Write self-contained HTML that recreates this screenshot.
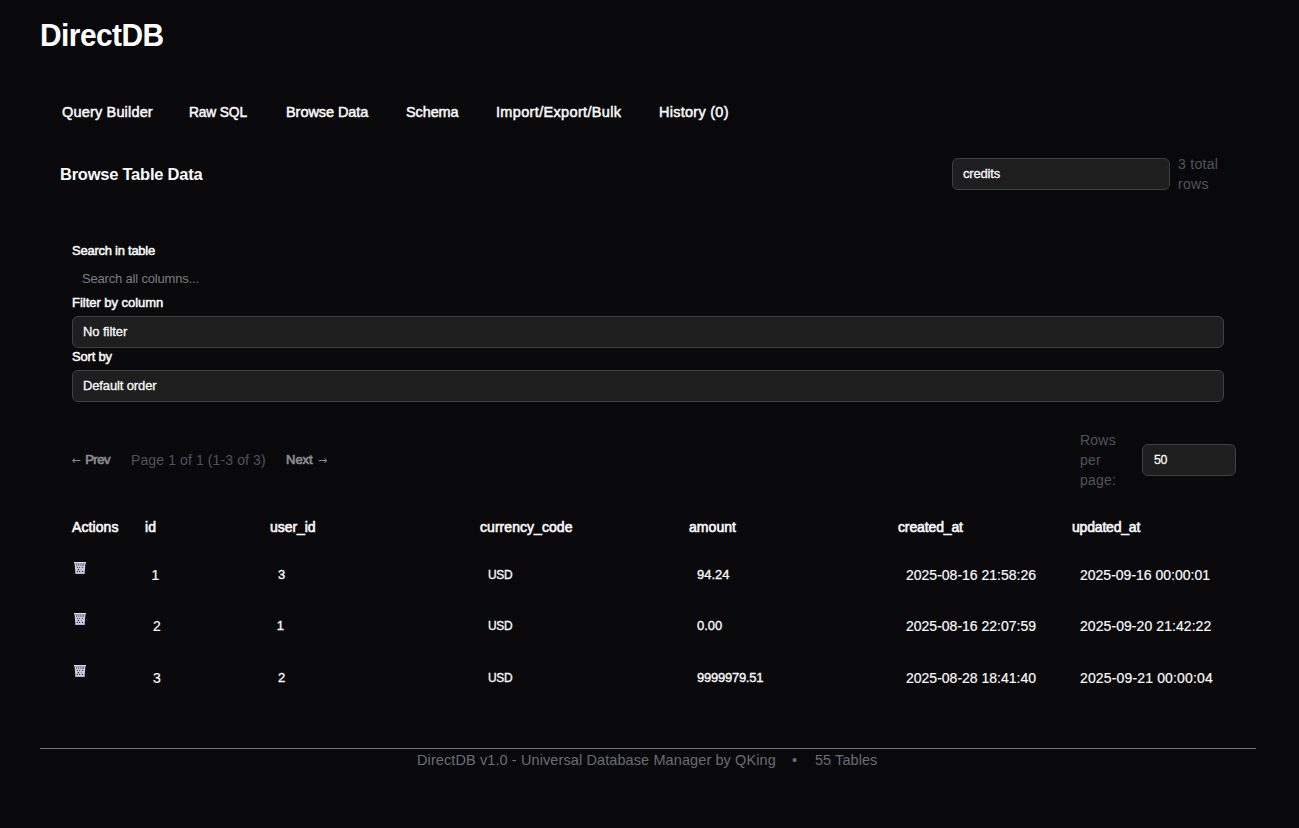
<!DOCTYPE html>
<html lang="en">
<head>
<meta charset="utf-8">
<title>DirectDB</title>
<style>
*{box-sizing:border-box;margin:0;padding:0}
html,body{width:1299px;height:828px;overflow:hidden;background:#09090b}
body{position:relative;font-family:"Liberation Sans",Arial,sans-serif;color:#fafafa;font-size:13px}
.abs{position:absolute;white-space:nowrap}
h1{left:40px;top:16px;font-size:32px;line-height:38px;font-weight:700;letter-spacing:-0.6px;color:#fff;transform:scaleX(0.935);transform-origin:0 0}
nav a{position:absolute;top:96px;line-height:32px;font-size:14.5px;font-weight:400;color:#fafafa;text-decoration:none;white-space:nowrap;-webkit-text-stroke:0.5px #fafafa}
h2{left:60px;top:163px;font-size:16.5px;line-height:22px;font-weight:700;color:#fafafa;letter-spacing:-0.24px}
.sel{background:#1e1e1e;border:1px solid #404040;border-radius:6px;height:32px}
.sel span{position:absolute;left:10px;top:-0.5px;line-height:30px;font-size:13px;color:#fafafa;-webkit-text-stroke:0.3px #fafafa}
.muted{color:#52525b;font-size:14px;line-height:20px}
label{font-size:13px;font-weight:400;-webkit-text-stroke:0.5px #fafafa;line-height:16px;color:#fafafa}
.ph{color:#7c7c82;font-size:13px;line-height:16px}
.pg{font-size:13px;font-weight:400;color:#8b8b8f;line-height:16px;-webkit-text-stroke:0.7px #8b8b8f}
.pg i{position:absolute;top:1px;font-style:normal;font-family:"DejaVu Sans",sans-serif;font-size:11px;line-height:16px;letter-spacing:0;-webkit-text-stroke:0}
th{position:absolute;top:519px;font-size:14px;letter-spacing:0.1px;font-weight:400;-webkit-text-stroke:0.6px #fafafa;line-height:16px;text-align:left;color:#fafafa;white-space:nowrap}
td{position:absolute;white-space:nowrap;color:#fafafa}
.s13{font-size:13px;line-height:16px;-webkit-text-stroke:0.35px #fafafa}
.s14{font-size:14px;line-height:18px;-webkit-text-stroke:0.2px #fafafa}
footer{left:40px;top:748px;width:1216px;border-top:1px solid #71717a;height:30px}
footer span{position:absolute;top:1px;line-height:20px;font-size:14.5px;color:#6c6c74;white-space:nowrap}
svg.tr{display:block;width:12px;height:12px}
</style>
</head>
<body>
<h1 class="abs" id="h1">DirectDB</h1>

<nav>
  <a id="t1" style="left:62px;letter-spacing:0.17px">Query Builder</a>
  <a id="t2" style="left:189px;letter-spacing:-0.15px;transform:scaleX(0.95);transform-origin:0 0">Raw SQL</a>
  <a id="t3" style="left:286px;letter-spacing:-0.06px">Browse Data</a>
  <a id="t4" style="left:406px;letter-spacing:-0.12px">Schema</a>
  <a id="t5" style="left:496px;letter-spacing:0.34px">Import/Export/Bulk</a>
  <a id="t6" style="left:659px;letter-spacing:0.26px">History (0)</a>
</nav>

<h2 class="abs" id="h2">Browse Table Data</h2>
<div class="abs sel" style="left:952px;top:158px;width:218px"><span id="selc" style="letter-spacing:-0.17px">credits</span></div>
<div class="abs muted" id="tot" style="left:1178px;top:154px;letter-spacing:0.30px">3 total<br>rows</div>

<label class="abs" id="l1" style="left:72px;top:243px;letter-spacing:-0.25px">Search in table</label>
<div class="abs ph" id="ph" style="left:82px;top:271px;letter-spacing:-0.18px">Search all columns...</div>
<label class="abs" id="l2" style="left:72px;top:295px;letter-spacing:-0.03px">Filter by column</label>
<div class="abs sel" style="left:72px;top:316px;width:1152px"><span id="nf" style="letter-spacing:-0.07px">No filter</span></div>
<label class="abs" id="l3" style="left:72px;top:349px;letter-spacing:-0.20px">Sort by</label>
<div class="abs sel" style="left:72px;top:370px;width:1152px"><span id="do" style="letter-spacing:-0.13px">Default order</span></div>

<div class="abs pg" id="prev" style="left:72px;top:452px;padding-left:13.2px;letter-spacing:-0.5px"><i style="left:-0.5px">←</i> Prev</div>
<div class="abs muted" id="page" style="left:131px;top:450px;letter-spacing:0.11px">Page 1 of 1 (1-3 of 3)</div>
<div class="abs pg" id="next" style="left:286px;top:452px;padding-right:14px">Next <i style="right:-0.5px">→</i></div>
<div class="abs muted" id="rpp" style="left:1080px;top:430px;letter-spacing:0.22px">Rows<br>per<br>page:</div>
<div class="abs sel" style="left:1142px;top:444px;width:94px"><span id="n50" style="letter-spacing:-0.4px;transform:scaleX(0.95);transform-origin:0 0;left:10.5px">50</span></div>

<table>
<thead><tr>
<th id="th1" style="left:72px;letter-spacing:0.10px">Actions</th>
<th id="th2" style="left:145px;letter-spacing:0.10px">id</th>
<th id="th3" style="left:270px;letter-spacing:-0.05px">user_id</th>
<th id="th4" style="left:480px;letter-spacing:0.05px">currency_code</th>
<th id="th5" style="left:689px;letter-spacing:0.05px">amount</th>
<th id="th6" style="left:898px;letter-spacing:-0.13px">created_at</th>
<th id="th7" style="left:1072px;letter-spacing:-0.19px">updated_at</th>
</tr></thead>
<tbody>
<tr>
<td style="left:74px;top:562px"><svg class="tr" viewBox="0 0 12 12" aria-label="Delete row"><path d="M0.6 1.6h10.8l-0.75 9.6H1.35z" fill="#cdcadd"/><path d="M0 0h12v1.35H0z" fill="#dddbe9"/><path d="M0.15 1.35h11.7v0.5H0.15z" fill="#b4a9d4"/><path d="M1.2 10.9h9.6l-0.08 1.1H1.28z" fill="#b8addA"/><g fill="#1c1a22"><ellipse cx="2.75" cy="3.05" rx="0.42" ry="0.75"/><ellipse cx="4.35" cy="3.05" rx="0.45" ry="0.8"/><ellipse cx="6.2" cy="3.05" rx="0.42" ry="0.75"/><ellipse cx="8.1" cy="3.05" rx="0.45" ry="0.8"/><ellipse cx="9.6" cy="3.05" rx="0.42" ry="0.75"/><circle cx="3.3" cy="5.25" r="0.62"/><circle cx="5.65" cy="5.25" r="0.58"/><circle cx="8.5" cy="5.25" r="0.62"/><circle cx="4.4" cy="7.5" r="0.66"/><circle cx="7.2" cy="7.5" r="0.5" fill="#6f6c82"/><circle cx="3.3" cy="9.4" r="0.6"/><circle cx="5.65" cy="9.4" r="0.58"/><circle cx="8.5" cy="9.4" r="0.6"/></g></svg></td>
<td class="s14" id="r1id" style="left:151.5px;top:566px">1</td>
<td class="s13" id="r1u" style="left:278px;top:567px">3</td>
<td class="s13" id="r1c" style="left:488px;top:567px;letter-spacing:-0.3px;transform:scaleX(0.92);transform-origin:0 0">USD</td>
<td class="s13" id="r1a" style="left:697px;top:567px">94.24</td>
<td class="s14" id="r1ca" style="left:906px;top:566px">2025-08-16 21:58:26</td>
<td class="s14" id="r1ua" style="left:1080px;top:566px">2025-09-16 00:00:01</td>
</tr>
<tr>
<td style="left:74px;top:613px"><svg class="tr" viewBox="0 0 12 12" aria-label="Delete row"><path d="M0.6 1.6h10.8l-0.75 9.6H1.35z" fill="#cdcadd"/><path d="M0 0h12v1.35H0z" fill="#dddbe9"/><path d="M0.15 1.35h11.7v0.5H0.15z" fill="#b4a9d4"/><path d="M1.2 10.9h9.6l-0.08 1.1H1.28z" fill="#b8addA"/><g fill="#1c1a22"><ellipse cx="2.75" cy="3.05" rx="0.42" ry="0.75"/><ellipse cx="4.35" cy="3.05" rx="0.45" ry="0.8"/><ellipse cx="6.2" cy="3.05" rx="0.42" ry="0.75"/><ellipse cx="8.1" cy="3.05" rx="0.45" ry="0.8"/><ellipse cx="9.6" cy="3.05" rx="0.42" ry="0.75"/><circle cx="3.3" cy="5.25" r="0.62"/><circle cx="5.65" cy="5.25" r="0.58"/><circle cx="8.5" cy="5.25" r="0.62"/><circle cx="4.4" cy="7.5" r="0.66"/><circle cx="7.2" cy="7.5" r="0.5" fill="#6f6c82"/><circle cx="3.3" cy="9.4" r="0.6"/><circle cx="5.65" cy="9.4" r="0.58"/><circle cx="8.5" cy="9.4" r="0.6"/></g></svg></td>
<td class="s14" id="r2id" style="left:153px;top:617px">2</td>
<td class="s13" id="r2u" style="left:276.8px;top:618px">1</td>
<td class="s13" id="r2c" style="left:488px;top:618px;letter-spacing:-0.3px;transform:scaleX(0.92);transform-origin:0 0">USD</td>
<td class="s13" id="r2a" style="left:697px;top:618px">0.00</td>
<td class="s14" id="r2ca" style="left:906px;top:617px">2025-08-16 22:07:59</td>
<td class="s14" id="r2ua" style="left:1080px;top:617px;letter-spacing:0.07px">2025-09-20 21:42:22</td>
</tr>
<tr>
<td style="left:74px;top:665px"><svg class="tr" viewBox="0 0 12 12" aria-label="Delete row"><path d="M0.6 1.6h10.8l-0.75 9.6H1.35z" fill="#cdcadd"/><path d="M0 0h12v1.35H0z" fill="#dddbe9"/><path d="M0.15 1.35h11.7v0.5H0.15z" fill="#b4a9d4"/><path d="M1.2 10.9h9.6l-0.08 1.1H1.28z" fill="#b8addA"/><g fill="#1c1a22"><ellipse cx="2.75" cy="3.05" rx="0.42" ry="0.75"/><ellipse cx="4.35" cy="3.05" rx="0.45" ry="0.8"/><ellipse cx="6.2" cy="3.05" rx="0.42" ry="0.75"/><ellipse cx="8.1" cy="3.05" rx="0.45" ry="0.8"/><ellipse cx="9.6" cy="3.05" rx="0.42" ry="0.75"/><circle cx="3.3" cy="5.25" r="0.62"/><circle cx="5.65" cy="5.25" r="0.58"/><circle cx="8.5" cy="5.25" r="0.62"/><circle cx="4.4" cy="7.5" r="0.66"/><circle cx="7.2" cy="7.5" r="0.5" fill="#6f6c82"/><circle cx="3.3" cy="9.4" r="0.6"/><circle cx="5.65" cy="9.4" r="0.58"/><circle cx="8.5" cy="9.4" r="0.6"/></g></svg></td>
<td class="s14" id="r3id" style="left:153px;top:669px">3</td>
<td class="s13" id="r3u" style="left:278px;top:670px">2</td>
<td class="s13" id="r3c" style="left:488px;top:670px;letter-spacing:-0.3px;transform:scaleX(0.92);transform-origin:0 0">USD</td>
<td class="s13" id="r3a" style="left:697px;top:670px;letter-spacing:-0.25px">9999979.51</td>
<td class="s14" id="r3ca" style="left:906px;top:669px">2025-08-28 18:41:40</td>
<td class="s14" id="r3ua" style="left:1080px;top:669px;letter-spacing:0.15px">2025-09-21 00:00:04</td>
</tr>
</tbody>
</table>

<footer class="abs">
  <span id="f1" style="left:377px;letter-spacing:0.10px">DirectDB v1.0 - Universal Database Manager by QKing</span>
  <span id="f2" style="left:752px">•</span>
  <span id="f3" style="left:775px;letter-spacing:0.06px">55 Tables</span>
</footer>

</body>
</html>
